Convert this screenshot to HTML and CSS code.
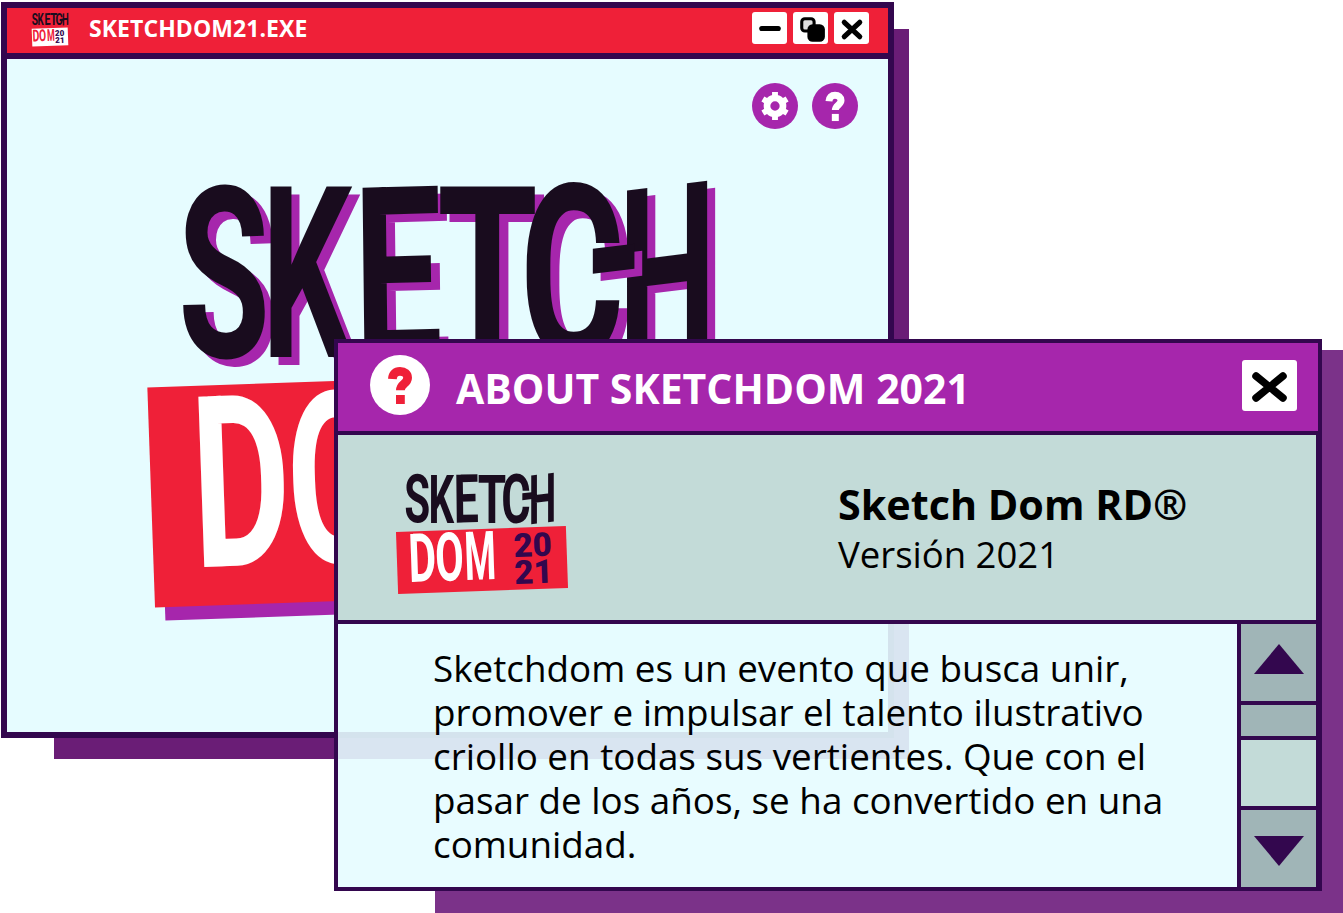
FILE: index.html
```html
<!DOCTYPE html>
<html lang="es">
<head>
<meta charset="utf-8">
<title>Sketchdom 2021</title>
<link rel="stylesheet" href="styles.css">
</head>
<body>
<main class="desktop">
  <div class="drop drop-main"></div>
  <section class="win win-main">
    <header class="main-bar">
      <div class="logo logo-tiny">
        <div class="sk"><span class="s">S</span><span class="k">K</span><span class="e">E</span><span class="t">T</span><span class="c">C</span><span class="h">H</span></div>
        <div class="plate"><div class="dom"><span class="d">D</span><span class="o">O</span><span class="m">M</span></div><div class="yr"><span>20</span><span>21</span></div></div>
      </div>
      <h1 class="main-title">SKETCHDOM21.EXE</h1>
      <div class="ctrls">
        <button class="ctrl"><svg viewBox="0 0 34 32"><path d="M9.5 16H25.5" class="ink"/></svg></button>
        <button class="ctrl"><svg viewBox="0 0 34 32"><rect x="8.5" y="6.5" width="12" height="12" rx="3" class="outline"/><rect x="14" y="12" width="17" height="17" rx="5" class="solid"/></svg></button>
        <button class="ctrl"><svg viewBox="0 0 34 32"><path d="M10 10L25 24M25 10L10 24" class="ink"/></svg></button>
      </div>
    </header>
    <div class="main-body">
      <div class="tools">
        <span class="tool tool-gear"><svg viewBox="0 0 24 24"><circle cx="12" cy="12" r="6" class="gear-ring"/><path d="M12 1.5V5M12 19v3.5M21.09 6.75L18.06 8.5M2.91 17.25L5.94 15.5M21.09 17.25L18.06 15.5M2.91 6.75L5.94 8.5" class="gear-teeth"/></svg></span>
        <span class="tool tool-help"><svg viewBox="0 0 24 24"><path d="M8.2 9C8.3 6.5 9.8 5.2 12 5.2c2.3 0 3.8 1.2 3.8 3.2 0 3-3.6 3-3.6 6.2" class="q-white"/><rect x="10" y="17" width="4.4" height="4.5" fill="#fff"/></svg></span>
      </div>
      <div class="logo logo-big">
        <div class="sk"><span class="s">S</span><span class="k">K</span><span class="e">E</span><span class="t">T</span><span class="c">C</span><span class="h">H</span></div>
        <div class="plate"><div class="dom"><span class="d">D</span><span class="o">O</span><span class="m">M</span></div><div class="yr"><span>20</span><span>21</span></div></div>
      </div>
    </div>
  </section>

  <div class="drop drop-about"></div>
  <section class="win win-about">
    <header class="about-bar">
      <span class="about-q"><svg viewBox="0 0 24 24"><path d="M8.2 9C8.3 6.5 9.8 5.2 12 5.2c2.3 0 3.8 1.2 3.8 3.2 0 3-3.6 3-3.6 6.2" class="q-red"/><rect x="10" y="17" width="4.4" height="4.5" fill="#ef2038"/></svg></span>
      <h2 class="about-title">ABOUT SKETCHDOM 2021</h2>
      <button class="about-close"><svg viewBox="0 0 55 51"><path d="M14 16L41 38M41 16L14 38" class="ink-lg"/></svg></button>
    </header>
    <div class="info">
      <div class="logo logo-mid">
        <div class="sk"><span class="s">S</span><span class="k">K</span><span class="e">E</span><span class="t">T</span><span class="c">C</span><span class="h">H</span></div>
        <div class="plate"><div class="dom"><span class="d">D</span><span class="o">O</span><span class="m">M</span></div><div class="yr"><span>20</span><span>21</span></div></div>
      </div>
      <div class="product">
        <strong class="product-name">Sketch Dom RD®</strong>
        <span class="product-ver">Versión 2021</span>
      </div>
    </div>
    <div class="content">
      <p class="copy">Sketchdom es un evento que busca unir, promover e impulsar el talento ilustrativo criollo en todas sus vertientes. Que con el pasar de los años, se ha convertido en una comunidad.</p>
      <div class="scroll">
        <div class="sb-btn sb-up"><svg viewBox="0 0 50 30"><polygon points="25,0 50,30 0,30"/></svg></div>
        <div class="sb-track"></div>
        <div class="sb-thumb"></div>
        <div class="sb-btn sb-down"><svg viewBox="0 0 50 30"><polygon points="0,0 50,0 25,30"/></svg></div>
      </div>
    </div>
  </section>
</main>
</body>
</html>
```
FILE: styles.css
```css
* { box-sizing: border-box; }
html, body { margin: 0; padding: 0; background: #fff; }
h1, h2, p { margin: 0; }
button { padding: 0; border: 0; font: inherit; }
svg { display: block; }

.desktop {
  position: relative;
  width: 1343px;
  height: 913px;
  overflow: hidden;
  font-family: "Open Sans", "Liberation Sans", sans-serif;
}

/* free-floating windows */
.win { position: absolute; display: flex; flex-direction: column; border-style: solid; border-color: #33074e; }
.drop { position: absolute; }
.drop-main { left: 54px; top: 29px; width: 855px; height: 730px; background: #6a1d76; }
.drop-about {
  left: 435px; top: 350px; width: 908px; height: 563px; background: #7b3289;
  clip-path: polygon(887px 0, 100% 0, 100% 100%, 0 100%, 0 541px, 887px 541px);
}

.win-main { left: 1px; top: 2px; width: 893px; height: 736px; border-width: 6px; background: #e6fcff; }
.main-bar {
  flex: none; display: flex; align-items: center; height: 51px;
  padding: 0 19px 6px 25px; background: #ef2038; border-bottom: 6px solid #33074e;
}
.main-title { margin: 1px 0 0 21px; font-size: 23px; font-weight: 700; line-height: 1; letter-spacing: .07px; color: #fff; }
.ctrls { margin-left: auto; display: flex; gap: 6px; }
.ctrl { width: 35px; height: 32px; background: #fff; border-radius: 3px; }
.ink { fill: none; stroke: #000; stroke-width: 5px; stroke-linecap: round; }
.ink-lg { fill: none; stroke: #000; stroke-width: 7.5px; stroke-linecap: round; }
.outline { fill: #e0e0e0; stroke: #000; stroke-width: 3px; }
.solid { fill: #000; }

.main-body { flex: 1; min-height: 0; padding: 24px 30px 0 144px; }
.tools { display: flex; justify-content: flex-end; gap: 14px; height: 102px; }
.tool { width: 46px; height: 46px; border-radius: 50%; background: #a626ac; }
.tool-gear { padding: 7px; }
.tool-help { padding: 4px; }
.gear-ring { fill: none; stroke: #fff; stroke-width: 5px; }
.gear-teeth { fill: none; stroke: #fff; stroke-width: 4.4px; }
.q-white, .q-red { fill: none; stroke-width: 4.4px; }
.q-white { stroke: #fff; }
.q-red { stroke: #ef2038; }

/* the Sketchdom lockup */
.logo { width: 17em; font-family: Roboto, "Liberation Sans", sans-serif; font-weight: 700; }
.logo-big { font-size: 35.5px; --lift: 6px 3.5px 0 #a626ac; }
.logo-mid { font-size: 10px; }
.logo-tiny { font-size: 2.45px; width: 14.7em; flex: none; margin-top: 6px; }

.sk { display: flex; align-items: center; height: 5.1em; margin-left: .82em; color: #190c1e; }
.sk span, .dom span { display: block; flex: none; font-size: 3em; line-height: 1.2; text-align: center; }
.sk span { text-shadow: var(--lift, none); }
.sk .s { width: .82em; transform: scale(1.4, 2.25) rotate(-1deg); }
.sk .k { width: .747em; transform: scale(1.34, 2.25); }
.sk .e { width: .957em; transform: scale(1.48, 2.25) rotate(-1deg); }
.sk .t { width: .725em; transform: scale(1.53, 2.25); }
.sk .c { width: .869em; transform: scale(1.5, 2.28); }
.sk .h { position: relative; width: .906em; transform: scale(1.3, 2.28) skewY(-4deg); }
.sk .h::before {
  content: ""; position: absolute; left: -.08em; top: .45em; width: .3em; height: .1em;
  background: #190c1e; box-shadow: var(--lift, none);
}

.plate {
  display: flex; align-items: center; width: 17em; height: 6.2em; margin-top: .32em; padding-left: 1.3em;
  background: #ef2038; color: #fff; transform: rotate(-2deg);
}
.logo-big .plate { box-shadow: .28em .38em 0 #a626ac; }
.dom { display: flex; flex: none; width: 8.6em; margin-bottom: .6em; }
.dom .d { width: .83em; transform: scale(1.42, 2.25); }
.dom .o { width: .98em; transform: scale(1.38, 2.25); }
.dom .m { width: 1.08em; transform: scale(1.2, 2.25); }
.yr { display: flex; flex-direction: column; gap: .55em; margin-left: 1.8em; color: #33074e; font-weight: 900; }
.yr span { display: block; font-size: 3em; line-height: .7em; transform: scale(1.1, 1.1); transform-origin: left center; }

.logo-tiny .sk { margin: 0; height: 5em; }
.logo-tiny .plate { width: 14.7em; height: 7.4em; margin-top: .3em; padding-left: .5em; background: #fff; color: #ef2038; }
.logo-tiny .dom { margin-bottom: 0; }
.logo-tiny .yr { margin-left: .4em; }

/* about dialog */
.win-about { left: 334px; top: 339px; width: 988px; height: 552px; border-width: 4px; }
.about-bar {
  flex: none; display: flex; align-items: center; height: 92px; padding: 0 21px 4px 32px;
  background: #a626ac; border-bottom: 4px solid #33074e;
}
.about-q { flex: none; width: 60px; height: 60px; padding: 6px; border-radius: 50%; background: #fff; }
.about-title { margin: 6px 0 0 26px; font-size: 41px; font-weight: 700; line-height: 1; color: #fff; }
.about-close { margin-left: auto; width: 55px; height: 51px; background: #fff; border-radius: 3px; }

.info {
  flex: none; display: flex; align-items: center; height: 189px; padding: 10px 0 0 59px;
  background: #c3dbd8; border-bottom: 4px solid #33074e; border-right: 2px solid #33074e;
}
.product { display: flex; flex-direction: column; margin: -7px 0 0 271px; color: #000; }
.product-name { font-size: 41.3px; font-weight: 700; line-height: 50px; }
.product-ver { font-size: 36.5px; line-height: 50px; }

.content { flex: 1; min-height: 0; display: flex; background: rgba(230, 252, 255, .9); }
.copy { flex: 1; padding: 22px 62px 0 95px; font-size: 36.8px; line-height: 44px; color: #000; }
.scroll {
  flex: none; width: 81px; display: flex; flex-direction: column; gap: 4px;
  background: #33074e; border-left: 4px solid #33074e; border-right: 2px solid #33074e;
}
.sb-btn { flex: none; display: flex; justify-content: center; height: 77px; background: #a0b5b7; }
.sb-up { padding-top: 20px; }
.sb-down { padding-top: 26px; }
.sb-btn svg { width: 50px; height: 30px; fill: #33074e; }
.sb-track { flex: none; height: 31px; background: #a0b5b7; }
.sb-thumb { flex: none; height: 66px; background: #c3dbd8; }
```
